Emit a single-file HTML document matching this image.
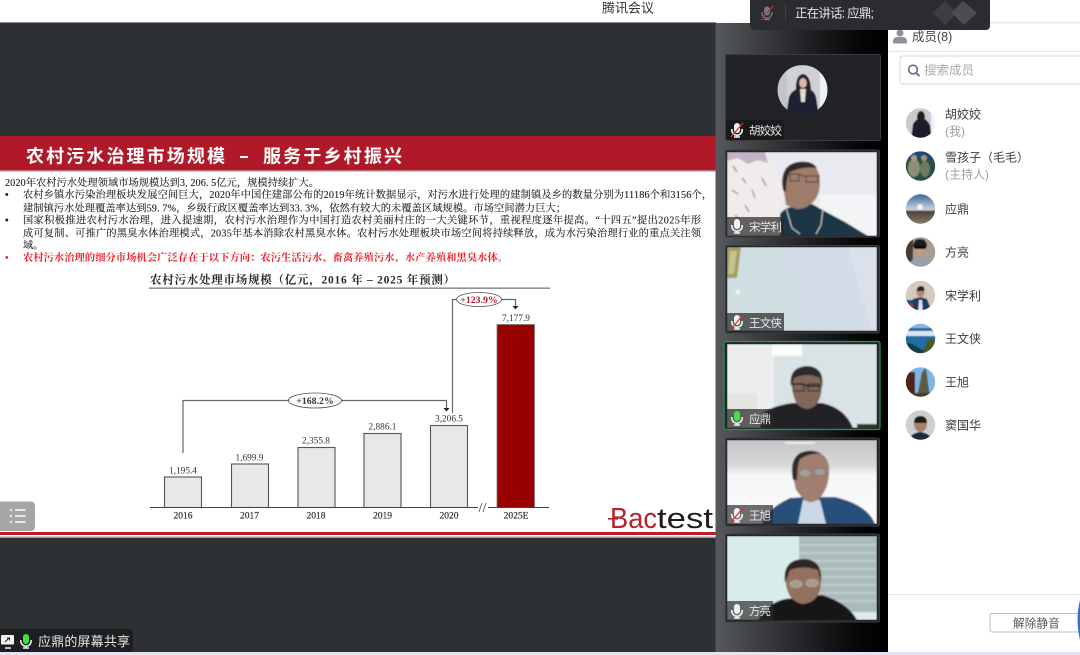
<!DOCTYPE html>
<html lang="zh"><head><meta charset="utf-8"><title>腾讯会议</title>
<style>
html,body{margin:0;padding:0;width:1080px;height:655px;overflow:hidden;background:#fff}
svg{display:block}
text{white-space:pre}
.s{font-family:"Liberation Sans","Noto Sans CJK SC",sans-serif}
.r{font-family:"Liberation Serif","Noto Serif CJK SC",serif}
.b{font-size:10.2px;fill:#1e1e1e;stroke:#1e1e1e;stroke-width:.12px}
.c{font-size:9.3px;fill:#333;text-anchor:middle;font-family:"Liberation Serif",serif}
.y{font-size:9.5px;fill:#333;stroke:#333;stroke-width:.2px;text-anchor:middle;font-family:"Liberation Serif",serif}
.n{font-size:12px;fill:#3c3c3c}
.g{font-size:12px;fill:#a0a0a0}
.t{font-size:11.5px;fill:#e8e8e8}
</style></head><body>
<svg width="1080" height="655" viewBox="0 0 1080 655" xmlns="http://www.w3.org/2000/svg">
<defs>
<filter id="bl" x="-5%" y="-5%" width="110%" height="110%"><feGaussianBlur stdDeviation="0.9"/></filter>
<filter id="bs" x="-5%" y="-5%" width="110%" height="110%"><feGaussianBlur stdDeviation="0.5"/></filter>
<filter id="bt" x="-5%" y="-20%" width="110%" height="140%"><feGaussianBlur stdDeviation="0.35"/></filter>
<linearGradient id="side" x1="0" x2="1" y1="0" y2="0"><stop offset="0" stop-color="#56595d"/><stop offset=".5" stop-color="#232427"/><stop offset=".85" stop-color="#050505"/><stop offset="1" stop-color="#000"/></linearGradient>
<linearGradient id="sky" x1="0" x2="0" y1="0" y2="1"><stop offset="0" stop-color="#3a6a9c"/><stop offset=".52" stop-color="#c9d3d6"/><stop offset=".6" stop-color="#4e443c"/><stop offset="1" stop-color="#8a7a68"/></linearGradient>
<linearGradient id="wall5" x1="0" x2="0" y1="0" y2="1"><stop offset="0" stop-color="#c4c4c6"/><stop offset=".3" stop-color="#d8d8da"/><stop offset=".42" stop-color="#f6f6f6"/><stop offset="1" stop-color="#fbfbfb"/></linearGradient>
<clipPath id="c1"><rect x="727" y="152" width="150" height="84"/></clipPath>
<clipPath id="c2"><rect x="727" y="247" width="150" height="84"/></clipPath>
<clipPath id="c3"><rect x="727" y="344" width="150" height="84"/></clipPath>
<clipPath id="c4"><rect x="727" y="440" width="150" height="84"/></clipPath>
<clipPath id="c5"><rect x="727" y="536" width="150" height="84"/></clipPath>
<clipPath id="ca"><circle cx="802.5" cy="90" r="25"/></clipPath>
<clipPath id="m1"><circle cx="920.5" cy="123" r="14.7"/></clipPath>
<clipPath id="m2"><circle cx="920.5" cy="166" r="14.7"/></clipPath>
<clipPath id="m3"><circle cx="920.5" cy="209" r="14.7"/></clipPath>
<clipPath id="m4"><circle cx="920.5" cy="252" r="14.7"/></clipPath>
<clipPath id="m5"><circle cx="920.5" cy="295.5" r="14.7"/></clipPath>
<clipPath id="m6"><circle cx="920.5" cy="338.5" r="14.7"/></clipPath>
<clipPath id="m7"><circle cx="920.5" cy="382" r="14.7"/></clipPath>
<clipPath id="m8"><circle cx="920.5" cy="425" r="14.7"/></clipPath>
<g id="mic"><rect x="-3" y="-7" width="6" height="10" rx="3" fill="#f2f2f2"/><path d="M-5.2 -1V0A5.2 5.2 0 0 0 5.2 0V-1" fill="none" stroke="#f2f2f2" stroke-width="1.6"/><path d="M0 5V7M-3 7H3" stroke="#f2f2f2" stroke-width="1.4" fill="none"/></g>
<g id="micm"><use href="#mic"/><path d="M-6 7L6 -7" stroke="#d9342f" stroke-width="1.3"/></g>
</defs>

<!-- base -->
<rect x="0" y="0" width="1080" height="655" fill="#fff"/>
<rect x="0" y="23" width="716" height="629" fill="#2e3134"/>
<rect x="0" y="22" width="716" height="1" fill="#8a8c8f"/>
<rect x="0" y="652" width="1080" height="3" fill="#e5e3ee"/>

<!-- slide -->
<rect x="0" y="136" width="716" height="402" fill="#fff"/>
<rect x="0" y="136" width="716" height="34.500" fill="#b01a28"/>
<rect x="0" y="170.500" width="716" height="1.500" fill="#c9c9c9"/>
<rect x="0" y="532" width="716" height="3" fill="#bb1c2b"/>
<rect x="0" y="536.500" width="716" height="1.500" fill="#9a9a9a"/>

<g filter="url(#bt)">
<text class="s" x="26" y="162.500" font-size="18" font-weight="700" fill="#fff" textLength="199" lengthAdjust="spacing">农村污水治理市场规模</text>
<rect x="240" y="156" width="8" height="2" fill="#fff"/>
<text class="s" x="263" y="162.500" font-size="18" font-weight="700" fill="#fff" textLength="139" lengthAdjust="spacing">服务于乡村振兴</text>

<text class="r b" x="5" y="186" textLength="314" lengthAdjust="spacing">2020年农村污水处理领域市场规模达到3, 206. 5亿元，规模持续扩大。</text>
<text class="r b" x="5" y="198" font-weight="700">•</text>
<text class="r b" x="23" y="198" textLength="689" lengthAdjust="spacing">农村乡镇水污染治理板块发展空间巨大，2020年中国住建部公布的2019年统计数据显示，对污水进行处理的建制镇及乡的数量分别为11186个和3156个，</text>
<text class="r b" x="23" y="211.500" textLength="543" lengthAdjust="spacing">建制镇污水处理覆盖率达到59. 7%，乡级行政区覆盖率达到33. 3%，依然有较大的未覆盖区域规模。市场空间潜力巨大；</text>
<text class="r b" x="5" y="223.500" font-weight="700">•</text>
<text class="r b" x="23" y="223.500" textLength="678" lengthAdjust="spacing">国家积极推进农村污水治理，进入提速期，农村污水治理作为中国打造农村美丽村庄的一大关键环节，重视程度逐年提高。“十四五”提出2025年形</text>
<text class="r b" x="23" y="236.500" textLength="678" lengthAdjust="spacing">成可复制、可推广的黑臭水体治理模式，2035年基本消除农村黑臭水体。农村污水处理板块市场空间将持续释放，成为水污染治理行业的重点关注领</text>
<text class="r b" x="23" y="248.500">域。</text>
<text class="r" x="5" y="261" font-size="10.200" font-weight="700" fill="#ee1c25">•</text>
<text class="r" x="23" y="261" font-size="10.200" font-weight="700" fill="#ee1c25" textLength="485" lengthAdjust="spacing">农村污水治理的细分市场机会广泛存在于以下方向：农污生活污水、畜禽养殖污水、水产养殖和黑臭水体。</text>

<!-- chart -->
<text class="r" x="150" y="283.500" font-size="11.500" font-weight="700" fill="#2a2a2a" textLength="305" lengthAdjust="spacing">农村污水处理市场规模（亿元，2016 年 – 2025 年预测）</text>
<rect x="149" y="287.500" width="401" height="1.300" fill="#777"/>
<g fill="#e8e8e8" stroke="#555" stroke-width="1.100">
<rect x="164.500" y="477" width="37" height="30.500"/>
<rect x="231.500" y="464" width="37" height="43.500"/>
<rect x="298" y="447.500" width="37" height="60"/>
<rect x="364" y="433.500" width="37" height="74"/>
<rect x="430.500" y="425.500" width="37" height="82"/>
</g>
<rect x="497" y="324.500" width="37.500" height="183" fill="#990000" stroke="#777" stroke-width=".8"/>
<path d="M150 507.500H478M488 507.500H549" stroke="#444" stroke-width="1.100"/>
<path d="M479 512L482 503M483 512L486 503" stroke="#555" stroke-width=".8"/>
<text class="c" x="183" y="473.500">1,195.4</text>
<text class="c" x="249.500" y="460.500">1,699.9</text>
<text class="c" x="316" y="443.500">2,355.8</text>
<text class="c" x="382.500" y="429.500">2,886.1</text>
<text class="c" x="449" y="421.500">3,206.5</text>
<text class="c" x="516" y="321">7,177.9</text>
<text class="y" x="183" y="518.500">2016</text>
<text class="y" x="249.500" y="518.500">2017</text>
<text class="y" x="316" y="518.500">2018</text>
<text class="y" x="382.500" y="518.500">2019</text>
<text class="y" x="449" y="518.500">2020</text>
<text class="y" x="516" y="518.500">2025E</text>
<path d="M183 453V400.500H446.500V408" fill="none" stroke="#666" stroke-width="1.200"/>
<path d="M443.500 408H449.500L446.500 411.500Z" fill="#222"/>
<ellipse cx="315" cy="400.500" rx="26.500" ry="7.500" fill="#fff" stroke="#555" stroke-width=".8"/>
<text class="c" x="315" y="404" font-weight="700" style="font-size:9.800px">+168.2%</text>
<path d="M452.500 413V299.500H515.500V306" fill="none" stroke="#666" stroke-width="1.200"/>
<path d="M512.500 306H518.500L515.500 309.500Z" fill="#222"/>
<ellipse cx="479" cy="299.500" rx="22.500" ry="7" fill="#fff" stroke="#555" stroke-width=".8"/>
<text class="c" x="479" y="303" font-weight="700" style="font-size:9.800px;fill:#b01a28">+123.9%</text>

<!-- logo -->
<text class="s" x="610" y="528" font-size="29" fill="#b8202c" textLength="47" lengthAdjust="spacingAndGlyphs">Bac</text>
<text class="s" x="657" y="528" font-size="29" fill="#231a1c" textLength="56" lengthAdjust="spacingAndGlyphs">test</text>
<rect x="608" y="518" width="10" height="1.600" fill="#b8202c"/>
</g>

<!-- menu button -->
<path d="M0 501.500H31a4 4 0 0 1 4 4V527a4 4 0 0 1-4 4H0Z" fill="#a6a6a6"/>
<path d="M10 510H12M15 510H25.500M10 516H12M15 516H25.500M10 522H12M15 522H25.500" stroke="#fff" stroke-width="1.400"/>

<!-- share label -->
<path d="M0 629H129a4 4 0 0 1 4 4V648a4 4 0 0 1-4 4H0Z" fill="#1c1e20"/>
<rect x="1" y="635" width="13" height="9.500" rx="1" fill="#f2f2f2"/>
<path d="M5 642L9 638M7 638H9.500V640.500" stroke="#222" stroke-width="1" fill="none"/>
<path d="M5 648H11" stroke="#f2f2f2" stroke-width="1.500"/>
<g transform="translate(26,641)"><rect x="-3" y="-7" width="6" height="10" rx="3" fill="#3fe04a"/><path d="M-5.200 -1V0A5.200 5.200 0 0 0 5.200 0V-1M0 5V7M-3 7H3" fill="none" stroke="#f2f2f2" stroke-width="1.500"/></g>
<text class="s" x="38" y="646" font-size="13" fill="#e6e6e6" textLength="92">应鼎的屏幕共享</text>

<!-- sidebar -->
<rect x="715.500" y="23" width="172.500" height="629" fill="url(#side)"/>

<!-- tile 1 -->
<rect x="725.500" y="54.500" width="155" height="86" rx="2" fill="#222326" stroke="#3a3c40"/>
<g clip-path="url(#ca)" filter="url(#bs)">
<rect x="777" y="65" width="51" height="50" fill="#cfd2d4"/>
<rect x="777" y="65" width="10" height="50" fill="#c3c5c8"/>
<rect x="820" y="65" width="8" height="50" fill="#eef1f6"/>
<path d="M786 116L789 97Q792 90 798 89L808 89Q814 90 816 97L819 116Z" fill="#1f2030"/>
<path d="M796 92Q795 75 803 74Q811 75 811 92L807 94H799Z" fill="#2a2026"/>
<ellipse cx="803" cy="83" rx="3.800" ry="5" fill="#d8b8a8"/>
<path d="M800 89H806L805 102H801Z" fill="#dedcd6"/>
</g>
<rect x="726" y="120" width="58" height="20" rx="1" fill="#191a1c"/>
<use href="#micm" x="737" y="130"/>
<text class="s t" x="749" y="134.500" textLength="33">胡姣姣</text>

<!-- tile 2 -->
<rect x="725.500" y="150" width="154" height="87" rx="2" fill="#25272a" stroke="#3a3c40"/>
<g clip-path="url(#c1)">
<g filter="url(#bl)">
<rect x="727" y="152" width="150" height="84" fill="#e9ebf0"/>
<rect x="820" y="195" width="57" height="41" fill="#f3f4f6"/>
<path d="M727 152H768L782 190L776 236H727Z" fill="#f0ecec"/>
<path d="M727 152H765L768 163L758 160L748 164L738 158L727 161Z" fill="#c5b2c4"/>
<path d="M733 166L737 172M742 178L746 183M732 190L738 194M752 190L755 198M745 205L749 212M762 178L766 186M735 215L740 220" stroke="#b88f9e" stroke-width="1.600" fill="none"/>
<path d="M780 236V214Q786 206 796 207L812 204Q826 212 845 222L868 236Z" fill="#1b3546"/>
<path d="M786 205Q784 190 782 184Q782 166 797 162Q815 160 819 174Q822 190 815 200Q806 210 796 209Z" fill="#9d7c6b"/>
<path d="M783 190Q779 165 798 162Q812 160 817 168Q803 166 790 172Q786 178 786 192Z" fill="#2f2b2c"/>
<path d="M787 174H799L803 176H820M790 174V181H799V174M806 176V182H818V176" stroke="#45403f" stroke-width="1" fill="none"/>
<path d="M786 208L792 228L800 234M823 208L821 225L816 234" stroke="#d8d4d0" stroke-width="1" fill="none"/>
</g>
</g>
<rect x="727" y="217" width="57" height="19" fill="#2a2a2a" fill-opacity=".72"/>
<use href="#mic" x="737" y="226"/>
<text class="s t" x="749" y="231" textLength="33">宋学利</text>

<!-- tile 3 -->
<rect x="725.500" y="245.500" width="154" height="87.500" rx="2" fill="#25272a" stroke="#3a3c40"/>
<g clip-path="url(#c2)">
<g filter="url(#bl)">
<rect x="727" y="247" width="150" height="84" fill="#cfdee1"/>
<path d="M780 247H877V331H800Z" fill="#d3dde7"/>
<path d="M848 247H877V331H872Z" fill="#dbe1ec"/>
<path d="M727 247H741L737 278H727Z" fill="#a39c60"/>
<path d="M730 251H737L734 274H728Z" fill="#c6c38e"/>
<circle cx="738" cy="292" r="2.500" fill="#eef2f0"/>
</g>
</g>
<rect x="727" y="313" width="57" height="19" fill="#2a2a2a" fill-opacity=".72"/>
<use href="#micm" x="737" y="322"/>
<text class="s t" x="749" y="327" textLength="33">王文侠</text>

<!-- tile 4 -->
<rect x="724" y="341.500" width="156" height="88" rx="2" fill="#25272a" stroke="#1a9a55" stroke-width="1.200"/>
<g clip-path="url(#c3)">
<g filter="url(#bl)">
<rect x="727" y="344" width="150" height="84" fill="#d9e2e4"/>
<rect x="727" y="344" width="47" height="84" fill="#eceeed"/>
<rect x="772" y="344" width="30" height="12" fill="#fbfdfb"/>
<rect x="727" y="393" width="30" height="35" fill="#e4e5e1"/>
<path d="M760 428V414Q775 405 793 403L822 403Q845 408 853 428Z" fill="#222427"/>
<path d="M792 385Q791 368 807 368Q823 368 822 385Q821 408 807 409Q793 408 792 385Z" fill="#7f675a"/>
<path d="M791 387Q788 367 807 366Q825 367 822 387L820 378Q807 372 794 378Z" fill="#2b2a2b"/>
<path d="M792 384H803L807 386H821" stroke="#1c1c1c" stroke-width="1.500"/>
<rect x="793" y="384" width="11" height="7" fill="none" stroke="#1c1c1c"/>
<rect x="808" y="384" width="11" height="7" fill="none" stroke="#1c1c1c"/>
<rect x="857" y="424" width="20" height="5" fill="#333"/>
</g>
</g>
<rect x="727" y="409" width="46" height="19" fill="#2a2a2a" fill-opacity=".72"/>
<g transform="translate(737,418)"><rect x="-3" y="-7" width="6" height="10" rx="3" fill="#3fe04a"/><path d="M-5.200 -1V0A5.200 5.200 0 0 0 5.200 0V-1M0 5V7M-3 7H3" fill="none" stroke="#f2f2f2" stroke-width="1.500"/></g>
<text class="s t" x="749" y="423" textLength="22">应鼎</text>

<!-- tile 5 -->
<rect x="725.500" y="438" width="154" height="88" rx="2" fill="#25272a" stroke="#3a3c40"/>
<g clip-path="url(#c4)">
<g filter="url(#bl)">
<rect x="727" y="440" width="150" height="84" fill="url(#wall5)"/>
<rect x="785" y="442" width="30" height="2" fill="#eee"/>
<path d="M762 524Q765 510 790 498L805 497L835 497Q868 505 875 524Z" fill="#25507a"/>
<path d="M798 524L803 500H820L826 524Z" fill="#c9d8e4"/>
<path d="M796 490Q792 474 793 465Q796 452 813 452Q828 453 829 468Q830 486 820 498Q812 505 804 500Z" fill="#a07e70"/>
<path d="M793 480Q789 460 800 453Q812 448 822 454Q812 452 800 459Q797 466 797 480Z" fill="#322c2c"/>
<ellipse cx="805" cy="473" rx="6" ry="4" fill="#a89c98" stroke="#7a7a7c" stroke-width=".8"/>
<ellipse cx="820" cy="472" rx="5.500" ry="4" fill="#a89c98" stroke="#7a7a7c" stroke-width=".8"/>
</g>
</g>
<rect x="727" y="505" width="46" height="19" fill="#2a2a2a" fill-opacity=".68"/>
<use href="#micm" x="737" y="515"/>
<text class="s t" x="749" y="519.500" textLength="22">王旭</text>

<!-- tile 6 -->
<rect x="725.500" y="534" width="154" height="88" rx="2" fill="#25272a" stroke="#3a3c40"/>
<g clip-path="url(#c5)">
<g filter="url(#bl)">
<rect x="727" y="536" width="150" height="84" fill="#d8eceb"/>
<rect x="799" y="536" width="78" height="84" fill="#a9bcba"/>
<path d="M799 545H877M799 553H877M799 561H877M799 569H877M799 577H877M799 585H877M799 593H877M799 601H877" stroke="#bfcecc" stroke-width="2"/>
<rect x="850" y="612" width="27" height="8" fill="#dfe8e8"/>
<path d="M758 620Q765 604 785 599L822 595Q848 603 857 620Z" fill="#131314"/>
<path d="M786 585Q784 562 803 561Q821 561 821 583Q820 602 803 604Q789 602 786 585Z" fill="#94705e"/>
<path d="M785 583Q782 560 803 559Q823 559 821 582L818 570Q803 565 790 570Z" fill="#2e2824"/>
<ellipse cx="796" cy="584" rx="6" ry="3.500" fill="#a89886" stroke="#b5b5b5" stroke-width=".8"/>
<ellipse cx="812" cy="583" rx="6" ry="3.500" fill="#a89886" stroke="#b5b5b5" stroke-width=".8"/>
</g>
</g>
<rect x="727" y="601" width="46" height="19" fill="#2a2a2a" fill-opacity=".68"/>
<use href="#mic" x="737" y="611"/>
<text class="s t" x="749" y="615" textLength="22">方亮</text>

<!-- right panel -->
<rect x="888" y="23" width="192" height="629" fill="#fff"/>
<rect x="888" y="22" width="192" height="1.500" fill="#e6e7ec"/>
<rect x="888" y="51" width="192" height="1" fill="#e3e5ea"/>
<circle cx="900" cy="33" r="3.500" fill="#8f9298"/>
<path d="M893 43.500V41Q893 37.500 897 37H903Q907 37.500 907 41V43.500Z" fill="#8f9298"/>
<text class="s" x="912" y="41" font-size="12.500" fill="#444">成员(8)</text>
<path d="M1080 56H903a3 3 0 0 0-3 3V81a3 3 0 0 0 3 3H1080" fill="#fff" stroke="#d4d7e1"/>
<circle cx="913" cy="69.500" r="4.300" fill="none" stroke="#6a7187" stroke-width="1.700"/>
<path d="M916 73L919.500 76" stroke="#6a7187" stroke-width="1.900"/>
<text class="s" x="924" y="74.500" font-size="12.500" fill="#aaa">搜索成员</text>

<!-- members -->
<g clip-path="url(#m1)"><g filter="url(#bs)"><rect x="905" y="108" width="31" height="31" fill="#c9cccf"/><rect x="931" y="108" width="5" height="31" fill="#eef2fa"/><path d="M911 140L913 124Q917 118 921 118Q926 118 930 125L932 140Z" fill="#1a1c2c"/><ellipse cx="921" cy="117" rx="4" ry="6" fill="#241c22"/></g></g>
<g clip-path="url(#m2)"><g filter="url(#bs)"><rect x="905" y="151" width="31" height="31" fill="#26504a"/><rect x="905" y="151" width="31" height="8" fill="#1f4a78"/><ellipse cx="914" cy="168" rx="6" ry="9" fill="#8c8e78"/><ellipse cx="925" cy="169" rx="5" ry="8" fill="#6c7a62"/><circle cx="914" cy="158" r="3" fill="#b09a80"/><circle cx="924" cy="158" r="3" fill="#a89278"/></g></g>
<circle cx="920.500" cy="209" r="14.700" fill="url(#sky)"/>
<circle cx="920" cy="207" r="3" fill="#eef4f8" filter="url(#bs)"/>
<g clip-path="url(#m4)"><g filter="url(#bs)"><rect x="905" y="237" width="31" height="31" fill="#a89e90"/><rect x="905" y="237" width="8" height="31" fill="#4a3a30"/><path d="M908 268Q910 258 920 257Q930 258 933 268Z" fill="#9da0ac"/><ellipse cx="920" cy="248" rx="6.500" ry="8" fill="#c09a84"/><path d="M913 247Q913 239 920 239Q927 239 927 247Z" fill="#1e1a1a"/><rect x="914" y="246" width="12" height="3" fill="#111"/></g></g>
<g clip-path="url(#m5)"><g filter="url(#bs)"><rect x="905" y="280" width="31" height="31" fill="#d3ccbe"/><path d="M905 311V300H914V312Z" fill="#2a4a70"/><path d="M910 312L913 299Q920 296 927 299L932 312Z" fill="#1d3a66"/><path d="M918 312L919 300H922L923 312Z" fill="#dce2ea"/><ellipse cx="920.500" cy="292" rx="4" ry="5.500" fill="#b08a74"/><path d="M916.500 291Q917 286 921 286Q925 286 924.500 291Z" fill="#2c2826"/><rect x="905" y="304" width="8" height="4" fill="#b03030"/></g></g>
<g clip-path="url(#m6)"><g filter="url(#bs)"><rect x="905" y="323" width="31" height="31" fill="#1f6fa4"/><rect x="905" y="323" width="31" height="5" fill="#8bb8e0"/><rect x="905" y="331" width="31" height="5" fill="#dce6ee"/><path d="M905 354V342Q915 344 922 350L936 342V354Z" fill="#123c4c"/><path d="M922 354L928 339L936 340V354Z" fill="#4a5a28"/></g></g>
<g clip-path="url(#m7)"><g filter="url(#bs)"><rect x="905" y="367" width="31" height="31" fill="#7fb4e4"/><rect x="905" y="372" width="10" height="26" fill="#4f221f"/><path d="M917 398L922 372L926 368L930 398Z" fill="#5e5a42"/><rect x="905" y="393" width="31" height="5" fill="#4a3a22"/></g></g>
<g clip-path="url(#m8)"><g filter="url(#bs)"><rect x="905" y="410" width="31" height="31" fill="#cfcfcf"/><path d="M908 441Q911 433 920 432Q930 433 933 441Z" fill="#1d2a3e"/><ellipse cx="920.500" cy="424" rx="6.500" ry="8" fill="#a87f6a"/><path d="M914 423Q914 416 920.500 416Q927 416 927 423Z" fill="#1e1a18"/></g></g>

<text class="s n" x="945" y="118.500">胡姣姣</text><text class="s g" x="945" y="135.500">(我)</text>
<text class="s n" x="945" y="161.500">雪孩子（毛毛）</text><text class="s g" x="945" y="178.500">(主持人)</text>
<text class="s n" x="945" y="213.500">应鼎</text>
<text class="s n" x="945" y="256.500">方亮</text>
<text class="s n" x="945" y="300">宋学利</text>
<text class="s n" x="945" y="343">王文侠</text>
<text class="s n" x="945" y="386.500">王旭</text>
<text class="s n" x="945" y="429.500">窦国华</text>

<rect x="888" y="594" width="192" height="1" fill="#e8e8ec"/>
<path d="M1080 613.500H992a2 2 0 0 0-2 2V630a2 2 0 0 0 2 2H1080" fill="#fff" stroke="#b9bcc8"/>
<text class="s" x="1013" y="627.500" font-size="11.700" fill="#555">解除静音</text>
<path d="M1080 600Q1075 620 1080 640Z" fill="#3a6fc4"/>

<!-- top -->
<text class="s" x="602" y="12.500" font-size="13" fill="#333">腾讯会议</text>
<path d="M750 0H990V26a4 4 0 0 1-4 4H754a4 4 0 0 1-4-4Z" fill="#2a2c30"/>
<g transform="translate(767,13)"><rect x="-2.800" y="-6.500" width="5.600" height="9" rx="2.800" fill="#7a7b80"/><path d="M-5 -1V0A5 5 0 0 0 5 0V-1M0 5V6.500M-3 6.500H3" stroke="#7a7b80" stroke-width="1.300" fill="none"/><path d="M-6 7L6 -7" stroke="#c4362f" stroke-width="1.100"/></g>
<rect x="785" y="3" width="1" height="19" fill="#3e4044"/>
<text class="s" x="795" y="17.500" font-size="12.500" fill="#e4e4e4" textLength="79">正在讲话: 应鼎;</text>
<g filter="url(#bt)"><path d="M933 13L945 1L957 13L945 25Z" fill="#3c3e43"/><path d="M951 13L963 1L977 13L964 25L957 18Z" fill="#4c4e53"/></g>
</svg>
</body></html>
